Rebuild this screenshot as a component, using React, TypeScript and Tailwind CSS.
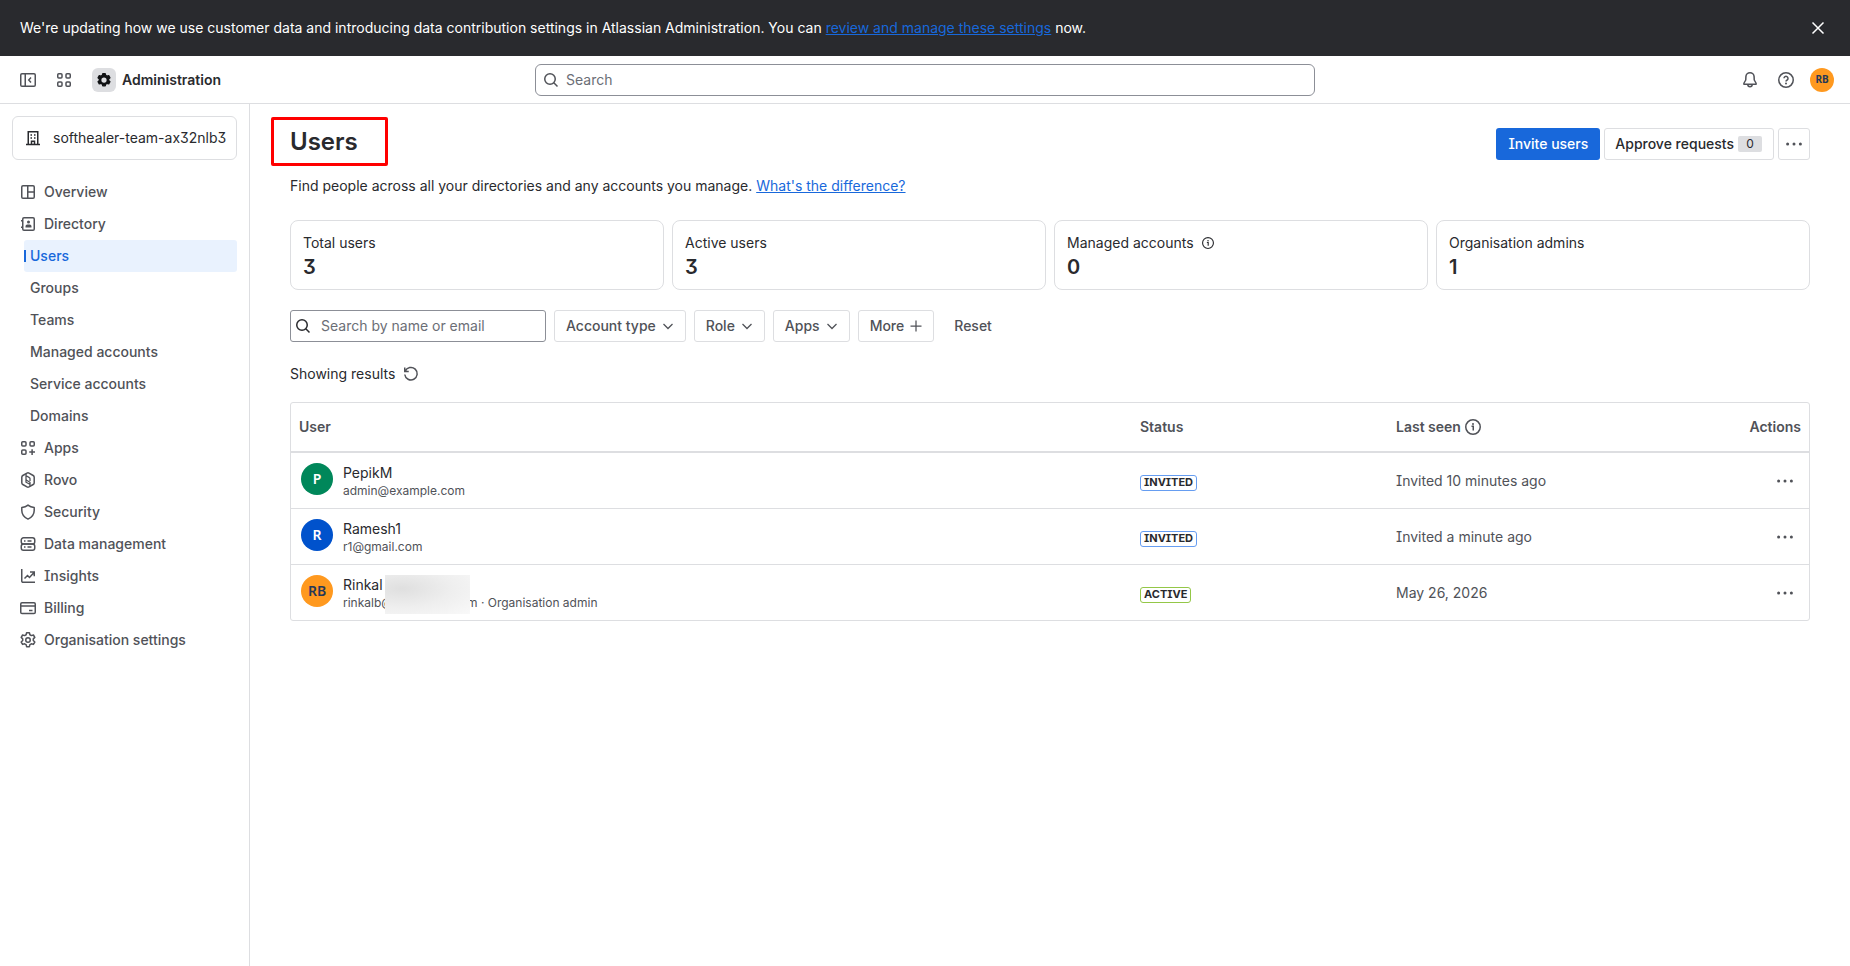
import React from "react";

type NavItem = { label: string; icon: React.ReactNode };
type User = {
  initials: string;
  avatar: string;
  name: string;
  email: React.ReactNode;
  hidden?: boolean;
  status: "INVITED" | "ACTIVE";
  lastSeen: string;
};

type IconProps = { children: React.ReactNode; className?: string };

const Icon: React.FC<IconProps> = ({ children, className = "size-4" }) => (
  <svg
    viewBox="0 0 16 16"
    fill="none"
    stroke="currentColor"
    strokeWidth="1.5"
    className={`${className} shrink-0`}
    aria-hidden="true"
  >
    {children}
  </svg>
);

const gearPath =
  "M6.6 .75h2.8l.5 2 1.5.85 2-.6 1.4 2.4-1.5 1.45v1.7l1.5 1.45-1.4 2.4-2-.6-1.5.85-.5 2H6.6l-.5-2-1.5-.85-2 .6-1.4-2.4 1.5-1.45v-1.7L1.2 5.4 2.6 3l2 .6 1.5-.85z";

const SearchIcon = () => (
  <Icon>
    <circle cx="7" cy="7" r="5.25" />
    <path d="m10.8 10.8 3.7 3.7" />
  </Icon>
);

const InfoIcon = ({ className }: { className?: string }) => (
  <Icon className={className}>
    <circle cx="8" cy="8" r="7.25" />
    <path d="M6.5 7.25h1.75V11.5" />
    <circle cx="8" cy="4.9" r="1" fill="currentColor" stroke="none" />
  </Icon>
);

const MoreIcon = () => (
  <Icon>
    <g fill="currentColor" stroke="none">
      <circle cx="1.6" cy="8" r="1.5" />
      <circle cx="8" cy="8" r="1.5" />
      <circle cx="14.4" cy="8" r="1.5" />
    </g>
  </Icon>
);

const topItems: NavItem[] = [
  {
    label: "Overview",
    icon: (
      <Icon>
        <rect x="1.75" y="1.75" width="12.5" height="12.5" rx="1.25" />
        <path d="M7.75 2v12M8 8h6" />
      </Icon>
    ),
  },
  {
    label: "Directory",
    icon: (
      <Icon>
        <rect x="2.75" y="1.75" width="11.5" height="12.5" rx="1.25" />
        <path d="M1 4.75h2M1 11.25h2" />
        <circle cx="8.5" cy="6" r="1.5" fill="currentColor" stroke="none" />
        <path d="M5.5 11.5V10.3a1.8 1.8 0 0 1 1.8-1.8h2.4a1.8 1.8 0 0 1 1.8 1.8v1.2z" fill="currentColor" stroke="none" />
      </Icon>
    ),
  },
];

const subItems = ["Users", "Groups", "Teams", "Managed accounts", "Service accounts", "Domains"];

const bottomItems: NavItem[] = [
  {
    label: "Apps",
    icon: (
      <Icon>
        <rect x="1.75" y="1.75" width="4.25" height="4.25" rx="1" />
        <rect x="10" y="1.75" width="4.25" height="4.25" rx="1" />
        <rect x="1.75" y="10" width="4.25" height="4.25" rx="1" />
        <path d="M12.1 9.25V15M9.25 12.1H15" />
      </Icon>
    ),
  },
  {
    label: "Rovo",
    icon: (
      <Icon>
        <path d="M7 1.1a2 2 0 0 1 2 0l4.2 2.4a2 2 0 0 1 1 1.75v5.5a2 2 0 0 1-1 1.75L9 14.9a2 2 0 0 1-2 0l-4.2-2.4a2 2 0 0 1-1-1.75v-5.5a2 2 0 0 1 1-1.75z" />
        <path d="M6 1.8v5.3c0 .5.2.9.6 1.1L10 10.3v3.9M10 8.9V6.6c0-.5-.2-.8-.6-1L6.2 3.8M6 7v3.2l3.8 2.1" strokeWidth="1.3" />
      </Icon>
    ),
  },
  {
    label: "Security",
    icon: (
      <Icon>
        <path
          d="M8 1.1c1.6 1.3 3.6 2.1 6.2 2.3v3.1c0 3.7-2.2 6.7-6.2 8.6-4-1.9-6.2-4.9-6.2-8.6V3.4C4.4 3.2 6.4 2.4 8 1.1z"
          strokeLinejoin="round"
        />
      </Icon>
    ),
  },
  {
    label: "Data management",
    icon: (
      <Icon>
        <rect x="1.25" y="1.75" width="13.5" height="6.25" rx="2.25" />
        <rect x="1.25" y="8" width="13.5" height="6.25" rx="2.25" />
        <path d="M7.5 4.9h4M7.5 11.1h4M4 4.9h1.5M4 11.1h1.5" />
      </Icon>
    ),
  },
  {
    label: "Insights",
    icon: (
      <Icon>
        <path d="M1.75 1v12A1.25 1.25 0 0 0 3 14.25h12" />
        <path d="m4.5 10.5 3-3 2 2L14 4.5M10 4h4.25v4.25" />
      </Icon>
    ),
  },
  {
    label: "Billing",
    icon: (
      <Icon>
        <rect x=".75" y="2.75" width="14.5" height="10.75" rx="1.25" />
        <path d="M1 6h14M9 10.5h3.5" />
      </Icon>
    ),
  },
  {
    label: "Organisation settings",
    icon: (
      <Icon>
        <path d={gearPath} strokeLinejoin="round" />
        <circle cx="8" cy="8" r="2.25" />
      </Icon>
    ),
  },
];

const stats = [
  { label: "Total users", value: 3 },
  { label: "Active users", value: 3 },
  { label: "Managed accounts", value: 0, info: true },
  { label: "Organisation admins", value: 1 },
];

const users: User[] = [
  {
    initials: "P",
    avatar: "bg-[#00875a] text-white",
    name: "PepikM",
    email: "admin@example.com",
    status: "INVITED",
    lastSeen: "Invited 10 minutes ago",
  },
  {
    initials: "R",
    avatar: "bg-[#0052cc] text-white",
    name: "Ramesh1",
    email: "r1@gmail.com",
    status: "INVITED",
    lastSeen: "Invited a minute ago",
  },
  {
    initials: "RB",
    avatar: "bg-[#ff991f] text-[#253858]",
    name: "Rinkal",
    email: (
      <span className="flex">
        <span className="w-[124px]">rinkalb@</span>
        <span>m · Organisation admin</span>
      </span>
    ),
    hidden: true,
    status: "ACTIVE",
    lastSeen: "May 26, 2026",
  },
];

const FilterButton = ({ label, plus }: { label: string; plus?: boolean }) => (
  <button className="flex h-8 items-center gap-1 rounded-[3px] border border-[#dddee1] pr-[9px] pl-[11px] font-medium text-[#505258]">
    {label}
    <Icon>
      {plus ? (
        <path d="M8 2.5v11M2.5 8h11" strokeWidth="1.25" />
      ) : (
        <path d="m3.5 6 4.5 4.5L12.5 6" strokeWidth="1.25" />
      )}
    </Icon>
  </button>
);

const Banner = () => (
  <div className="flex h-14 items-center justify-between bg-[#292a2e] px-5 text-white">
    <p>
      We're updating how we use customer data and introducing data contribution settings in Atlassian
      Administration. You can{" "}
      <a href="#" className="text-[#1868db] underline">
        review and manage these settings
      </a>{" "}
      now.
    </p>
    <button aria-label="Dismiss" className="flex size-6 items-center justify-center">
      <Icon>
        <path d="m2.5 2.5 11 11M13.5 2.5l-11 11" />
      </Icon>
    </button>
  </div>
);

const Header = () => (
  <header className="flex h-12 items-center border-b border-[#dddee1] px-4">
    <div className="flex flex-1 items-center text-[#505258]">
      <button aria-label="Collapse sidebar" className="flex size-6 items-center justify-center">
        <Icon>
          <rect x=".75" y="1.75" width="14.5" height="12.5" rx="1.25" />
          <path d="M5.25 2v12M11 5.5 8.75 8 11 10.5" />
        </Icon>
      </button>
      <button aria-label="Switch apps" className="ml-3 flex size-6 items-center justify-center">
        <Icon>
          <rect x="1.75" y="1.75" width="4.25" height="4.25" rx="1" />
          <rect x="10" y="1.75" width="4.25" height="4.25" rx="1" />
          <rect x="1.75" y="10" width="4.25" height="4.25" rx="1" />
          <rect x="10" y="10" width="4.25" height="4.25" rx="1" />
        </Icon>
      </button>
      <a href="#" className="ml-4 flex items-center gap-1.5 font-semibold text-[#292a2e]">
        <span className="flex size-6 items-center justify-center rounded-md bg-[#dddee1] text-[#101214]">
          <Icon className="size-[14px]">
            <path d={gearPath} fill="currentColor" strokeLinejoin="round" />
            <circle cx="8" cy="8" r="3" fill="#dddee1" stroke="none" />
          </Icon>
        </span>
        Administration
      </a>
    </div>
    <label className="flex h-8 w-full max-w-[780px] items-center gap-[7px] rounded-md border border-[#8c8f97] px-[7px] text-[#505258]">
      <SearchIcon />
      <input
        type="search"
        aria-label="Search"
        placeholder="Search"
        className="flex-1 outline-none placeholder:text-[#6b6e76]"
      />
    </label>
    <div className="flex flex-1 items-center justify-end gap-3 text-[#505258]">
      <button aria-label="Notifications" className="flex size-6 items-center justify-center">
        <Icon>
          <path
            d="M8 .75a4.1 4.1 0 0 0-4.1 3.9L3.75 8 1.9 11.25v1h12.2v-1L12.25 8l-.15-3.35A4.1 4.1 0 0 0 8 .75z"
            strokeLinejoin="round"
          />
          <path d="M5.8 12.5a2.2 2.2 0 0 0 4.4 0" />
        </Icon>
      </button>
      <button aria-label="Help" className="flex size-6 items-center justify-center">
        <Icon>
          <circle cx="8" cy="8" r="7.25" />
          <path d="M6 6.3a2 2 0 1 1 3.1 1.7C8.3 8.4 8 8.7 8 9.6" />
          <circle cx="8" cy="11.6" r="1" fill="currentColor" stroke="none" />
        </Icon>
      </button>
      <button
        aria-label="Account"
        className="flex size-6 items-center justify-center rounded-full bg-[#ff991f] font-['Noto_Sans',sans-serif] text-[10px] font-bold text-[#253858]"
      >
        RB
      </button>
    </div>
  </header>
);

const NavLink = ({ label, icon }: NavItem) => (
  <a href="#" className="flex h-8 items-center gap-2 px-2">
    {icon}
    {label}
  </a>
);

const Sidebar = () => (
  <aside className="w-[250px] shrink-0 border-r border-[#dddee1] px-3 pt-3">
    <button className="flex h-11 w-full items-center gap-3 rounded-md border border-[#dddee1] pl-3 whitespace-nowrap text-[#292a2e]">
      <Icon>
        <path d="M3.25 15V1.75h9.5V15M1 14.5h14" />
        <path d="M6.5 14.5v-3.25h3v3.25" />
        <path d="M5.5 5H7M9 5h1.5M5.5 8H7M9 8h1.5" />
      </Icon>
      softhealer-team-ax32nlb3
    </button>
    <nav className="mt-4 font-medium text-[#505258]">
      {topItems.map((item) => (
        <NavLink key={item.label} {...item} />
      ))}
      <div className="pl-3">
        {subItems.map((label) =>
          label === "Users" ? (
            <a
              key={label}
              href="#"
              aria-current="page"
              className="flex h-8 items-center gap-1 rounded-[3px] bg-[#e9f2fe] text-[#1868db]"
            >
              <span className="h-3 w-0.5 bg-[#1868db]" />
              {label}
            </a>
          ) : (
            <a key={label} href="#" className="flex h-8 items-center px-1.5">
              {label}
            </a>
          )
        )}
      </div>
      {bottomItems.map((item) => (
        <NavLink key={item.label} {...item} />
      ))}
    </nav>
  </aside>
);

const UsersTable = () => (
  <div className="mt-4 rounded-[3px] border border-[#dddee1]">
    <table className="w-full table-fixed text-left text-[#505258]">
      <thead>
        <tr className="h-[49px] border-b-2 border-[#dddee1]">
          <th className="px-2 font-semibold">User</th>
          <th className="w-64 px-2 font-semibold">Status</th>
          <th className="w-64 px-2 font-semibold">
            <span className="flex items-center gap-1">
              Last seen
              <InfoIcon />
            </span>
          </th>
          <th className="w-[165px] px-2 text-right font-semibold">Actions</th>
        </tr>
      </thead>
      <tbody>
        {users.map((user) => (
          <tr key={user.name} className="h-14 border-b border-[#dddee1] last:border-b-0">
            <td className="px-2 pt-0.5">
              <div className="flex items-center gap-2">
                <span className="-mt-1 p-0.5">
                  <span
                    className={`flex size-8 items-center justify-center rounded-full font-['Noto_Sans',sans-serif] font-semibold ${user.avatar}`}
                  >
                    {user.initials}
                  </span>
                </span>
                <div className="relative">
                  <div className="leading-5 text-[#292a2e]">{user.name}</div>
                  <div className="text-xs leading-4">{user.email}</div>
                  {user.hidden && (
                    <span className="absolute top-0 left-[42px] h-[39px] w-[85px] bg-radial-[at_20%_35%] from-[#dfdfdf] via-[#eeeeee] to-[#f9f9f9]" />
                  )}
                </div>
              </div>
            </td>
            <td className="px-2 pt-0.5">
              <span
                className={`inline-flex h-4 items-center rounded-[3px] border px-[3px] text-[11px] font-bold text-[#292a2e] ${
                  user.status === "ACTIVE" ? "border-[#94c748]" : "border-[#669df1]"
                }`}
              >
                {user.status}
              </span>
            </td>
            <td className="px-2 pt-0.5">{user.lastSeen}</td>
            <td className="px-2 pt-0.5">
              <button aria-label={`Actions for ${user.name}`} className="ml-auto flex size-8 items-center justify-center">
                <MoreIcon />
              </button>
            </td>
          </tr>
        ))}
      </tbody>
    </table>
  </div>
);

const App: React.FC = () => {
  return (
    <div className="flex min-h-screen flex-col bg-white font-[Inter,sans-serif] text-sm text-[#292a2e] [font-feature-settings:'cv08','cv09']">
      <Banner />
      <Header />
      <div className="flex flex-1">
        <Sidebar />
        <main className="min-w-0 flex-1 px-10 pt-6">
          <div className="flex items-start justify-between">
            <h1 className="relative text-2xl leading-7 font-semibold">
              Users
              <span className="absolute -top-[11px] -left-[19px] h-[49px] w-[117px] rounded-[2px] border-3 border-[#ff0000]" />
            </h1>
            <div className="flex gap-1">
              <button className="h-8 rounded-[3px] bg-[#1868db] px-3 font-medium text-white">Invite users</button>
              <button className="flex h-8 items-center gap-1 rounded-[3px] border border-[#dddee1] pr-[11px] pl-[10px] font-medium">
                Approve requests
                <span className="h-4 w-6 rounded-[2px] bg-[#dddee1] text-center text-xs leading-4 font-normal">0</span>
              </button>
              <button
                aria-label="More actions"
                className="flex size-8 items-center justify-center rounded-[3px] border border-[#dddee1] text-[#505258]"
              >
                <MoreIcon />
              </button>
            </div>
          </div>
          <p className="mt-4 leading-5">
            Find people across all your directories and any accounts you manage.{" "}
            <a href="#" className="text-[#1868db] underline">
              What's the difference?
            </a>
          </p>

          <div className="mt-6 grid grid-cols-4 gap-2">
            {stats.map((stat) => (
              <div key={stat.label} className="h-[70px] rounded-lg border border-[#dddee1] px-3 pt-3">
                <div className="flex items-center gap-2 leading-5">
                  {stat.label}
                  {stat.info && <InfoIcon className="size-3" />}
                </div>
                <div className="text-xl leading-7 font-semibold">{stat.value}</div>
              </div>
            ))}
          </div>

          <div className="mt-5 flex gap-2">
            <label className="flex h-8 w-64 items-center gap-2.5 rounded-[3px] border border-[#8c8f97] px-1">
              <SearchIcon />
              <input
                type="text"
                aria-label="Search by name or email"
                placeholder="Search by name or email"
                className="min-w-0 flex-1 outline-none placeholder:text-[#6b6e76]"
              />
            </label>
            <FilterButton label="Account type" />
            <FilterButton label="Role" />
            <FilterButton label="Apps" />
            <FilterButton label="More" plus />
            <button className="h-8 px-3 font-medium text-[#505258]">Reset</button>
          </div>

          <div className="mt-5 flex h-6 items-center gap-2">
            Showing results
            <button aria-label="Refresh" className="text-[#505258]">
              <Icon>
                <path d="M1.75 1.5v4h4M2.2 5.2A6.25 6.25 0 1 1 1.75 8.5" />
              </Icon>
            </button>
          </div>

          <UsersTable />
        </main>
      </div>
    </div>
  );
};

export default App;
